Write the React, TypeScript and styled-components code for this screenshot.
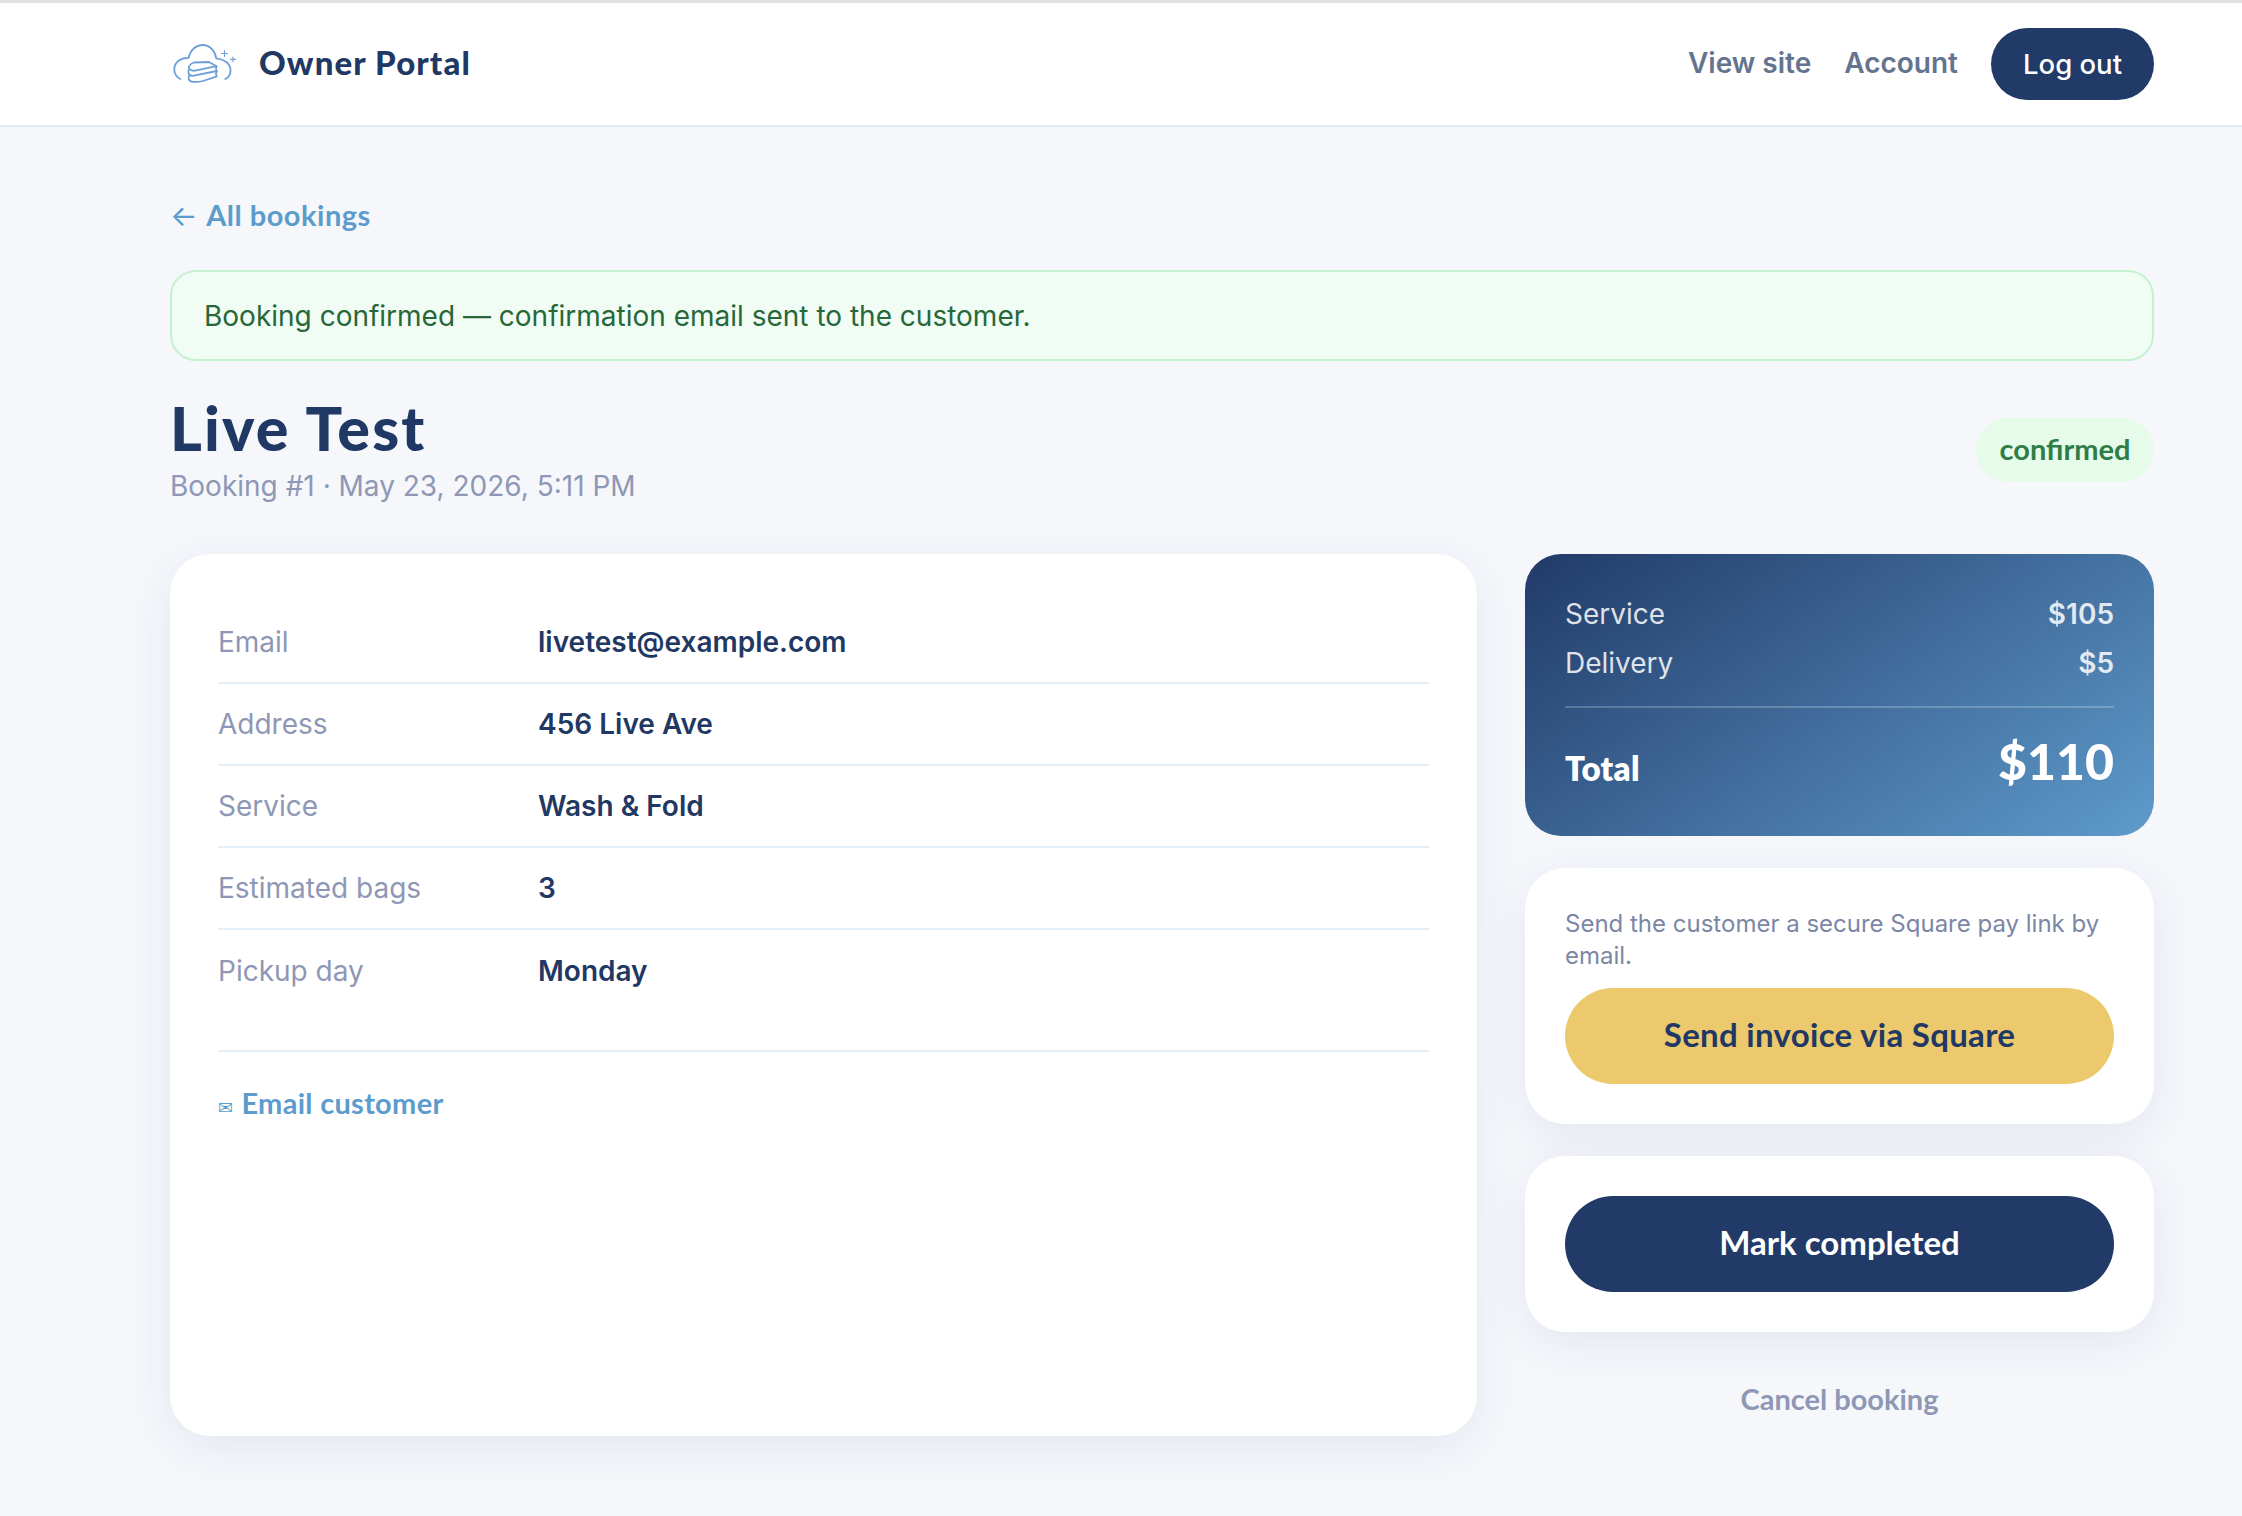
import React from "react";
import styled, { createGlobalStyle } from "styled-components";

const BODY_FONT = `"Inter", "Liberation Sans", sans-serif`;
const HEAD_FONT = `"Lato", "Noto Sans", sans-serif`;

const GlobalStyle = createGlobalStyle`
  html, body {
    margin: 0;
    padding: 0;
    background: #f5f7fb;
  }
  * {
    box-sizing: border-box;
  }
`;

const Page = styled.div`
  min-height: 1516px;
  background: #f5f7fb;
  font-family: ${BODY_FONT};
  color: #1f3864;
`;

const TopBar = styled.header`
  height: 127px;
  padding: 0 88px 0 173px;
  display: flex;
  align-items: center;
  justify-content: space-between;
  background: #ffffff;
  border-top: 3px solid #e2e2e2;
  border-bottom: 2px solid #dfeaf5;
`;

const Brand = styled.div`
  display: flex;
  align-items: center;
  gap: 22px;
`;

const BrandName = styled.span`
  font-family: ${HEAD_FONT};
  font-weight: 900;
  font-size: 33px;
  line-height: 40px;
  margin-top: -4px;
  letter-spacing: 1.1px;
  color: #1f3864;
`;

const NavLinks = styled.nav`
  display: flex;
  align-items: center;
  gap: 33px;
`;

const NavLink = styled.a`
  font-weight: 600;
  font-size: 28px;
  margin-top: -2px;
  color: #64748f;
`;

const LogoutButton = styled.button`
  width: 163px;
  height: 72px;
  border: 0;
  border-radius: 36px;
  background: #213a68;
  color: #ffffff;
  font-family: ${BODY_FONT};
  font-weight: 500;
  font-size: 27.5px;
`;

const Main = styled.main`
  padding: 68px 88px 80px 170px;
`;

const BackLink = styled.a`
  display: block;
  height: 40px;
  line-height: 40px;
  font-family: ${HEAD_FONT};
  font-weight: 700;
  font-size: 29px;
  letter-spacing: 0.5px;
  color: #5c9ccc;
`;

const Arrow = styled.span`
  font-family: ${BODY_FONT};
  font-weight: 400;
  margin-right: 8px;
`;

const Alert = styled.div`
  margin-top: 35px;
  height: 91px;
  padding: 0 32px;
  display: flex;
  align-items: center;
  background: #f1fdf4;
  border: 2px solid #c6f1d0;
  border-radius: 26px;
  font-size: 28px;
  color: #276739;
`;

const TitleRow = styled.div`
  margin-top: 32px;
  display: flex;
  align-items: center;
  justify-content: space-between;
`;

const Title = styled.h1`
  margin: 0;
  font-family: ${HEAD_FONT};
  font-weight: 900;
  font-size: 61px;
  line-height: 70px;
  letter-spacing: 2.2px;
  color: #1f3864;
`;

const Subtitle = styled.div`
  margin-top: 3px;
  font-size: 28px;
  line-height: 40px;
  color: #8e97b5;
`;

const StatusBadge = styled.span`
  width: 178px;
  height: 64px;
  padding-bottom: 2px;
  border-radius: 32px;
  display: flex;
  align-items: center;
  justify-content: center;
  background: #e6fbe9;
  font-family: ${HEAD_FONT};
  font-weight: 700;
  font-size: 29px;
  color: #2f7d46;
`;

const Columns = styled.div`
  margin-top: 48px;
  display: grid;
  grid-template-columns: 1307px 629px;
  gap: 48px;
`;

const Card = styled.section`
  background: #ffffff;
  border-radius: 40px;
  box-shadow: 0 12px 48px rgba(31, 56, 100, 0.08);
`;

const DetailsCard = styled(Card)`
  height: 882px;
  padding: 48px;
`;

const DetailRow = styled.div<{ last?: boolean }>`
  height: 82px;
  display: grid;
  grid-template-columns: 320px 1fr;
  align-items: center;
  border-bottom: ${({ last }) => (last ? "none" : "2px solid #e3eef8")};
`;

const DetailLabel = styled.span`
  font-size: 28px;
  color: #8e97b5;
`;

const DetailValue = styled.span`
  font-weight: 600;
  font-size: 28px;
  color: #1f3864;
`;

const EmailBlock = styled.div`
  margin-top: 38px;
  padding-top: 33px;
  border-top: 2px solid #e3eef8;
`;

const EmailLink = styled.a`
  font-family: ${HEAD_FONT};
  font-weight: 700;
  font-size: 29px;
  letter-spacing: 0.3px;
  color: #5c9ccc;
`;

const EnvelopeGlyph = styled.span`
  font-family: "DejaVu Sans", sans-serif;
  font-weight: 400;
  font-size: 18px;
  margin-right: 8px;
`;

const Sidebar = styled.aside`
  display: flex;
  flex-direction: column;
  gap: 32px;
`;

const SummaryCard = styled.section`
  height: 282px;
  padding: 35px 40px 0;
  border-radius: 36px;
  background: linear-gradient(145deg, #213a68 0%, #5e9bcb 100%);
`;

const SummaryRow = styled.div`
  height: 49px;
  display: flex;
  align-items: center;
  justify-content: space-between;
  font-size: 28px;
  color: rgba(255, 255, 255, 0.85);
`;

const SummaryAmount = styled.span`
  font-weight: 600;
`;

const TotalRow = styled.div`
  margin-top: 19px;
  padding-top: 22px;
  display: flex;
  align-items: center;
  justify-content: space-between;
  border-top: 2px solid rgba(255, 255, 255, 0.22);
  color: #ffffff;
`;

const TotalLabel = styled.span`
  padding-top: 14px;
  font-family: ${HEAD_FONT};
  font-weight: 800;
  font-size: 33px;
  letter-spacing: 0.3px;
`;

const TotalAmount = styled.span`
  font-family: ${HEAD_FONT};
  font-weight: 900;
  font-size: 50px;
  line-height: 62px;
`;

const ActionCard = styled(Card)`
  padding: 40px;
`;

const ActionHint = styled.p`
  margin: 0 0 17px;
  font-size: 24px;
  line-height: 31.5px;
  color: #7c86a5;
`;

const ActionButton = styled.button<{ tone: "gold" | "navy" }>`
  width: 100%;
  height: 96px;
  padding: 0 0 4px;
  border: 0;
  border-radius: 48px;
  background: ${({ tone }) => (tone === "gold" ? "#ebc96c" : "#213a68")};
  color: ${({ tone }) => (tone === "gold" ? "#1f3864" : "#ffffff")};
  font-family: ${HEAD_FONT};
  font-weight: 700;
  font-size: 33px;
  letter-spacing: ${({ tone }) => (tone === "gold" ? "0.3px" : "0")};
`;

const CancelLink = styled.a`
  margin-top: 15px;
  text-align: center;
  font-family: ${HEAD_FONT};
  font-weight: 700;
  font-size: 29px;
  line-height: 40px;
  color: #8e97b5;
`;

const Logo = () => (
  <svg width="64" height="40" viewBox="0 0 64 40" fill="none" stroke="#6f9fd8" strokeWidth="1.8" strokeLinecap="round" strokeLinejoin="round">
    <path d="M7.5 35C3.5 33.5 1 29 1.3 24.5C1.8 18.5 7.5 13.5 15.7 13.8C17.5 5.5 23.5 1 29.5 1C36.5 1 42 6.5 43.3 14.3C50.5 15 57 19 57.5 25.5C57.8 30 55.5 33.5 52.3 35" />
    <path d="M21 18.5L36 18L43.5 22.2L22 26.7C17.5 27.2 15 24.5 16 22.5C17 20.3 19 19 21 18.5Z" />
    <path d="M16.3 25C14.5 27.5 15 31.2 19.5 31.8L43.8 27C42.8 25.5 43 23.5 43.5 22.2" />
    <path d="M16.5 31C14.5 34 15.5 37.4 20 37.8C24 38.1 27 37.8 30 37L43.8 32.4C42.8 30.8 43 28.5 43.8 27" />
    <path d="M51.5 6.5V12.5M48.5 9.5H54.5" strokeWidth="1.1" />
    <path d="M60 13V17.8M57.6 15.4H62.4" strokeWidth="1.1" />
  </svg>
);

const details = [
  { label: "Email", value: "livetest@example.com" },
  { label: "Address", value: "456 Live Ave" },
  { label: "Service", value: "Wash & Fold" },
  { label: "Estimated bags", value: "3" },
  { label: "Pickup day", value: "Monday" },
];

export default function App() {
  return (
    <Page>
      <GlobalStyle />
      <TopBar>
        <Brand>
          <Logo />
          <BrandName>Owner Portal</BrandName>
        </Brand>
        <NavLinks>
          <NavLink>View site</NavLink>
          <NavLink>Account</NavLink>
          <LogoutButton>Log out</LogoutButton>
        </NavLinks>
      </TopBar>
      <Main>
        <BackLink>
          <Arrow>←</Arrow>All bookings
        </BackLink>
        <Alert>Booking confirmed — confirmation email sent to the customer.</Alert>
        <TitleRow>
          <div>
            <Title>Live Test</Title>
            <Subtitle>Booking #1 · May 23, 2026, 5:11 PM</Subtitle>
          </div>
          <StatusBadge>confirmed</StatusBadge>
        </TitleRow>
        <Columns>
          <DetailsCard>
            {details.map((row, i) => (
              <DetailRow key={row.label} last={i === details.length - 1}>
                <DetailLabel>{row.label}</DetailLabel>
                <DetailValue>{row.value}</DetailValue>
              </DetailRow>
            ))}
            <EmailBlock>
              <EmailLink>
                <EnvelopeGlyph>✉</EnvelopeGlyph>Email customer
              </EmailLink>
            </EmailBlock>
          </DetailsCard>
          <Sidebar>
            <SummaryCard>
              <SummaryRow>
                <span>Service</span>
                <SummaryAmount>$105</SummaryAmount>
              </SummaryRow>
              <SummaryRow>
                <span>Delivery</span>
                <SummaryAmount>$5</SummaryAmount>
              </SummaryRow>
              <TotalRow>
                <TotalLabel>Total</TotalLabel>
                <TotalAmount>$110</TotalAmount>
              </TotalRow>
            </SummaryCard>
            <ActionCard>
              <ActionHint>Send the customer a secure Square pay link by email.</ActionHint>
              <ActionButton tone="gold">Send invoice via Square</ActionButton>
            </ActionCard>
            <ActionCard>
              <ActionButton tone="navy">Mark completed</ActionButton>
            </ActionCard>
            <CancelLink>Cancel booking</CancelLink>
          </Sidebar>
        </Columns>
      </Main>
    </Page>
  );
}
